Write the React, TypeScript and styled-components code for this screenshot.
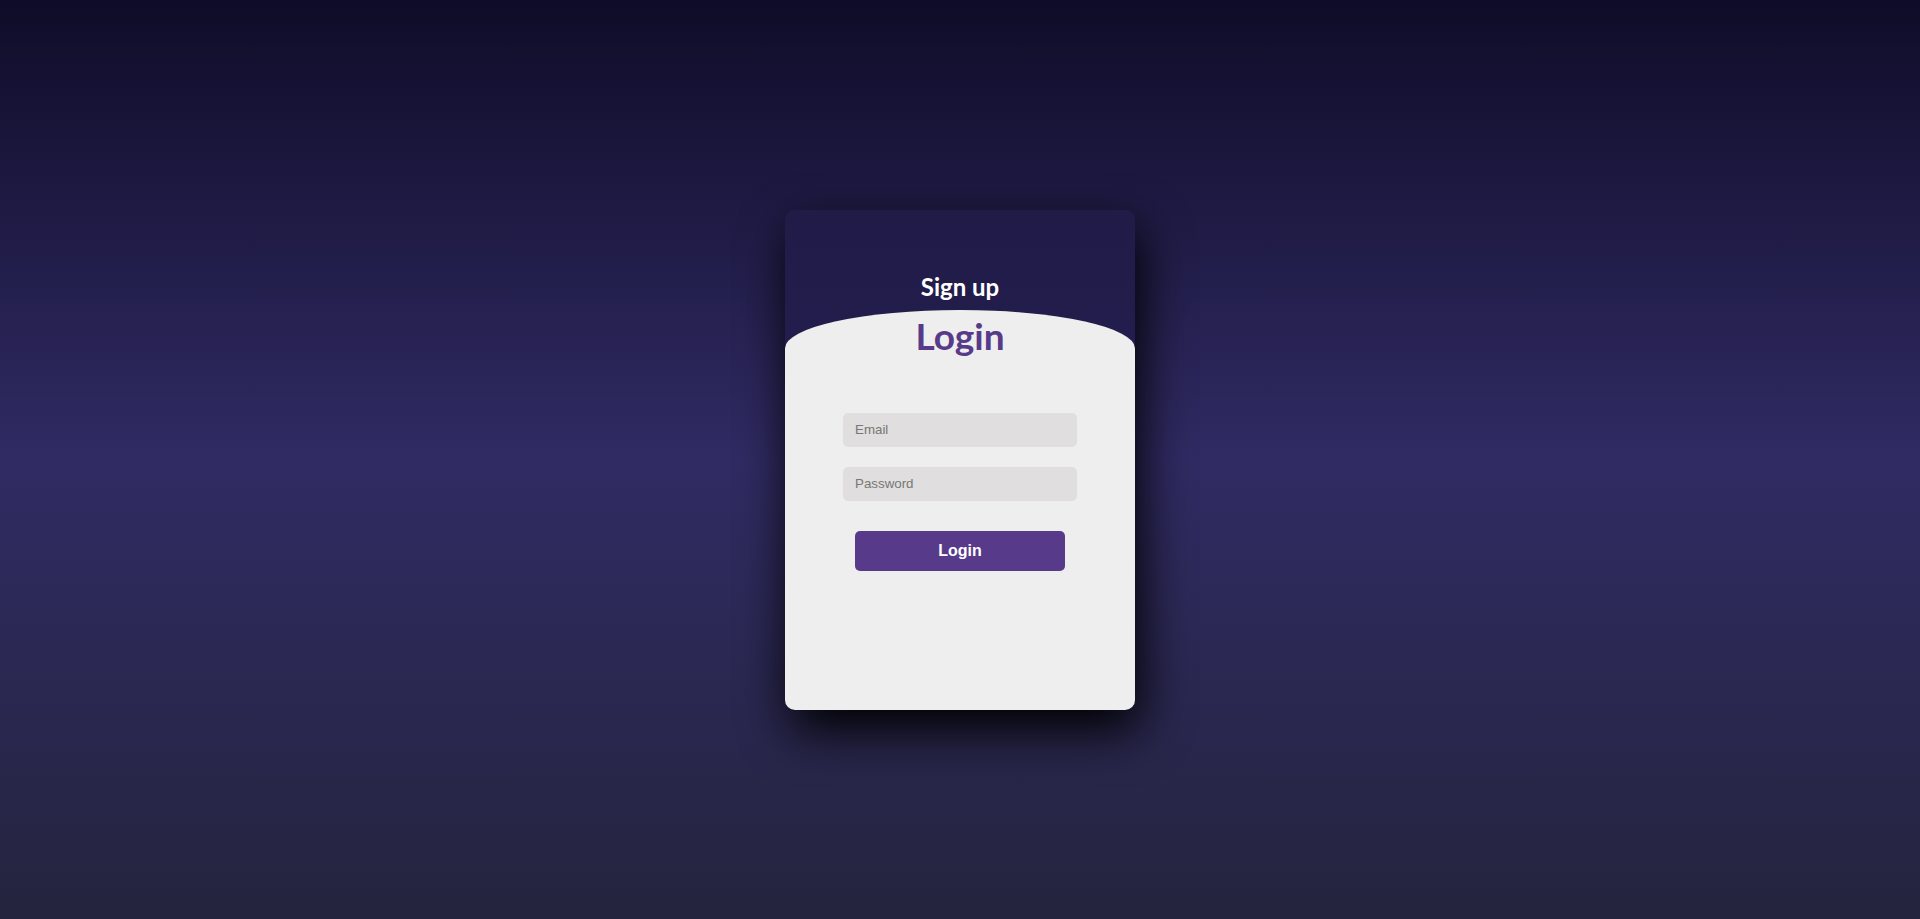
import { useState } from "react";
import styled, { createGlobalStyle } from "styled-components";

const GlobalStyle = createGlobalStyle`
    * {
        box-sizing: border-box;
    }
    body {
        margin: 0;
        min-height: 100vh;
        font-family: Lato, "Open Sans", sans-serif;
        background: linear-gradient(to bottom, #0f0c29, #302b63, #24243e);
    }
`

const Pagina = styled.main`
    display: flex;
    justify-content: center;
    align-items: center;
    height: 100vh;
`

const Cartao = styled.div`
    width: 350px;
    height: 500px;
    display: flex;
    flex-direction: column;
    overflow: hidden;
    border-radius: 10px;
    background: linear-gradient(to bottom, #211b48, #29235c);
    box-shadow: 5px 20px 50px #000;
`

const Cabecalho = styled.div`
    height: 100px;
    flex-shrink: 0;
    display: flex;
    justify-content: center;
`

const Rotulo = styled.label<{ $cor: string; $tamanho: number; $topo: number }>`
    display: block;
    margin-top: ${p => p.$topo}px;
    color: ${p => p.$cor};
    font-size: ${p => p.$tamanho}px;
    line-height: ${p => p.$tamanho}px;
    font-weight: 700;
    text-align: center;
    cursor: pointer;
`

const Painel = styled.section`
    height: 460px;
    flex-shrink: 0;
    background: #eee;
    border-radius: 60% / 10%;
    display: flex;
    flex-direction: column;
    align-items: center;
`

const Formulario = styled.form`
    display: flex;
    flex-direction: column;
    align-items: center;
    gap: 20px;
    margin-top: 59px;
`

const Campo = styled.input`
    width: 234px;
    height: 34px;
    padding: 0 12px;
    border: none;
    outline: none;
    border-radius: 5px;
    background: #e0dede;
    font-family: "Liberation Sans", Arial, sans-serif;
    font-size: 13.333px;
    color: #333;

    &::placeholder {
        color: #777;
    }
`

const Botao = styled.button`
    width: 210px;
    height: 40px;
    margin-top: 10px;
    border: none;
    outline: none;
    border-radius: 5px;
    background: #573b8a;
    color: #fff;
    font-family: "Liberation Sans", Arial, sans-serif;
    font-size: 16px;
    font-weight: 700;
    cursor: pointer;
`

export default function App() {
    const [email, setEmail] = useState('')
    const [senha, setSenha] = useState('')

    return (
        <>
            <GlobalStyle />
            <Pagina>
                <Cartao>
                    <Cabecalho>
                        <Rotulo $cor="#fff" $tamanho={24} $topo={65}>Sign up</Rotulo>
                    </Cabecalho>
                    <Painel>
                        <Rotulo $cor="#573b8a" $tamanho={37} $topo={7}>Login</Rotulo>
                        <Formulario onSubmit={e => e.preventDefault()}>
                            <Campo type="email" placeholder="Email" value={email} onChange={e => setEmail(e.target.value)} />
                            <Campo type="password" placeholder="Password" value={senha} onChange={e => setSenha(e.target.value)} />
                            <Botao type="submit">Login</Botao>
                        </Formulario>
                    </Painel>
                </Cartao>
            </Pagina>
        </>
    )
}
